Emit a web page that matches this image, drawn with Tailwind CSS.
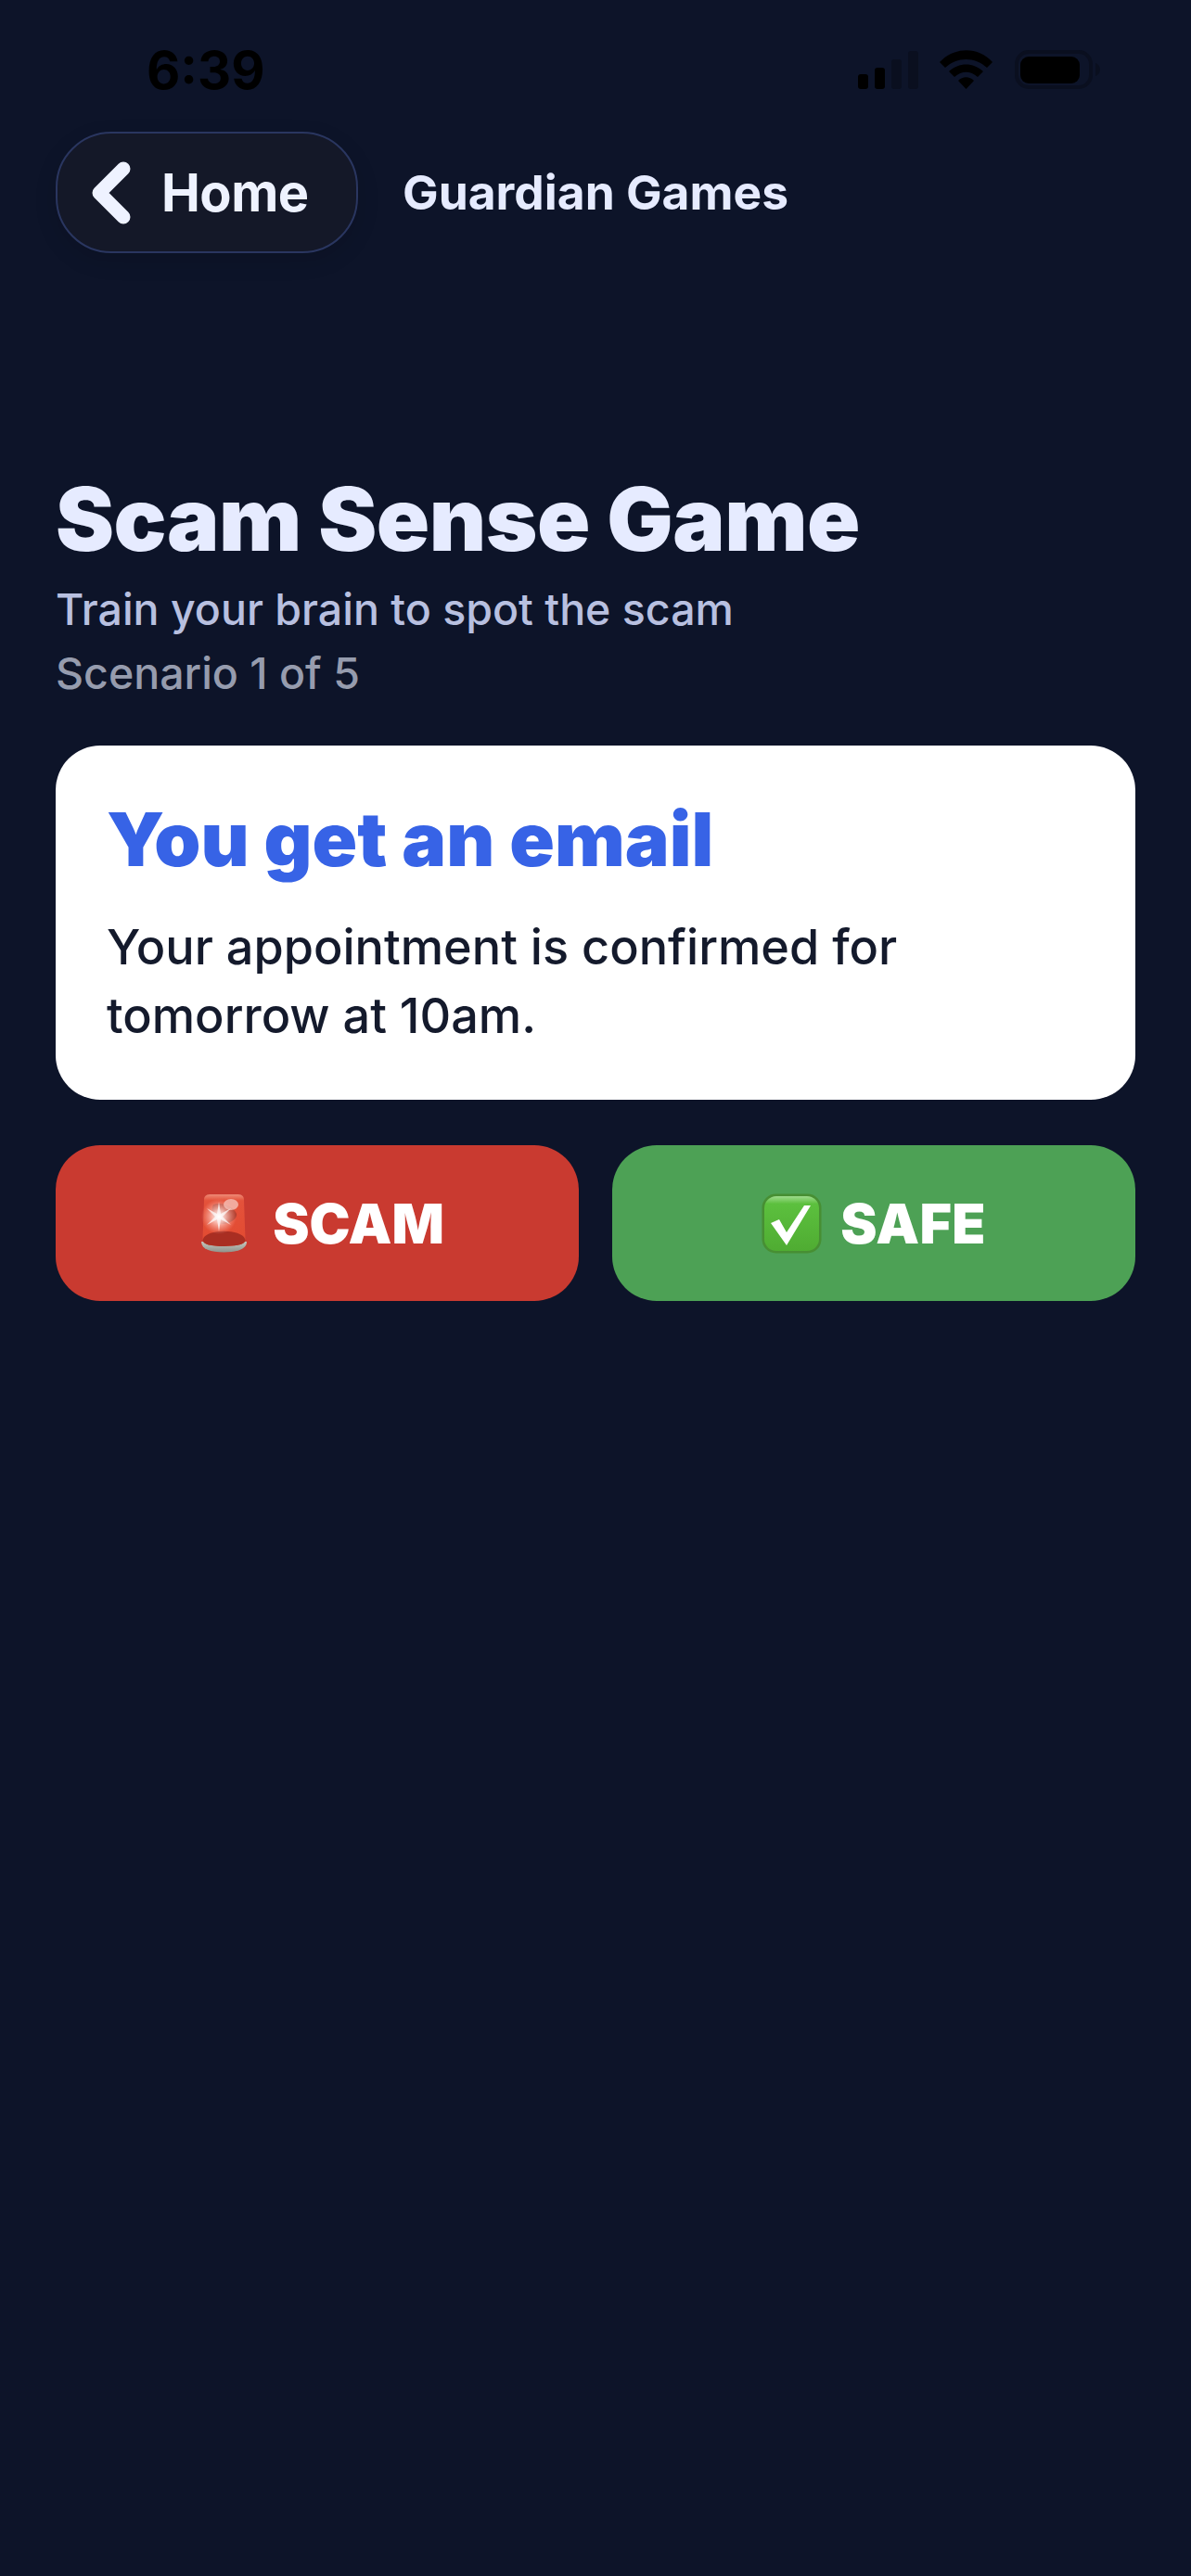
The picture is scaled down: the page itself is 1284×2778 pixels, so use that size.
<!doctype html>
<html lang="en">
<head>
<meta charset="utf-8">
<script src="https://cdn.jsdelivr.net/npm/@tailwindcss/browser@4"></script>
<title>Scam Sense Game</title>
</head>
<body class="m-0 bg-[#0d1429] font-['Inter',sans-serif]">
<div class="w-[1284px] h-[2778px] overflow-hidden flex flex-col">
  <div class="h-[142px] shrink-0 flex justify-between items-start pt-[44px] pl-[158px] pr-[97px]">
    <span class="text-[56px] leading-[64px] font-bold text-black">6:39</span>
    <svg class="mt-[10px]" width="262" height="44" viewBox="0 0 262 44">
      <rect x="0" y="26" width="11" height="16" rx="3" fill="#000"/>
      <rect x="18" y="19" width="11" height="23" rx="3" fill="#000"/>
      <rect x="36" y="10" width="11" height="32" rx="3" fill="#0a0f1f"/>
      <rect x="54" y="1" width="11" height="41" rx="3" fill="#0a0f1f"/>
      <path d="M88 13 C104 -4 130 -4 145 13 L139 19 C126 7 107 7 94 19Z M98 23 C109 13 124 13 135 23 L129 29 C121 22 112 22 104 29Z M108 33 C113 28 120 28 125 33 L116.500 42Z" fill="#000"/>
      <rect x="171" y="2" width="80" height="38" rx="13" fill="none" stroke="#0a0f1f" stroke-width="4"/>
      <rect x="175" y="7" width="64" height="29" rx="9" fill="#000"/>
      <path d="M256 14 C259 15 261 18 261 21 C261 24 259 27 256 28Z" fill="#0a0f1f"/>
    </svg>
  </div>
  <div class="flex items-center gap-[48px] pl-[60px] h-[131px] shrink-0">
    <div class="w-[326px] h-[131px] rounded-[60px] border-2 border-[#2a3660] bg-[#141828] flex items-center pl-[36px] gap-[32px] shadow-[0_8px_24px_rgba(0,0,0,0.12)]">
      <svg width="44" height="68" viewBox="0 0 44 68" class="shrink-0">
        <path d="M35 8 L9 34 L35 60" fill="none" stroke="#eef2ff" stroke-width="15" stroke-linecap="round" stroke-linejoin="round"/>
      </svg>
      <span class="text-[56px] leading-none font-bold tracking-[-0.5px] text-[#eef2ff]">Home</span>
    </div>
    <span class="text-[51.5px] leading-none font-bold text-[#e6ebff]">Guardian Games</span>
  </div>
  <div class="px-[60px] pt-[237px] flex flex-col">
    <h1 class="text-[94.7px] leading-[100px] font-black tracking-[-0.5px] text-[#e6ebff]">Scam Sense Game</h1>
    <p class="text-[46.5px] leading-[56px] mt-[19px] font-medium text-[#b8c0e0]">Train your brain to spot the scam</p>
    <p class="text-[46.5px] leading-[56px] mt-[13px] font-medium text-[#969cae]">Scenario 1 of 5</p>
    <div class="mt-[50px] h-[382px] rounded-[48px] bg-white px-[55px] pt-[55px] flex flex-col">
      <h2 class="text-[80.3px] leading-[92px] font-black text-[#3763e6]">You get an email</h2>
      <p class="mt-[33px] text-[52.2px] leading-[74px] font-medium text-[#141a2c]">Your appointment is confirmed for<br>tomorrow at 10am.</p>
    </div>
    <div class="mt-[49px] grid grid-cols-2 gap-[36px]">
      <div class="h-[168px] rounded-[48px] bg-[#c93a30] flex items-center justify-center gap-[28px] pl-[9px]">
        <svg class="ml-[3px]" width="49" height="64" viewBox="0 0 49 64">
          <defs>
            <linearGradient id="dome" x1="0" y1="0" x2="0" y2="1"><stop offset="0" stop-color="#ee8a76"/><stop offset="0.12" stop-color="#e4523b"/><stop offset="1" stop-color="#e24a30"/></linearGradient>
            <linearGradient id="base" x1="0" y1="0" x2="0" y2="1"><stop offset="0" stop-color="#c4c6bd"/><stop offset="1" stop-color="#8f938c"/></linearGradient>
            <radialGradient id="glow"><stop offset="0" stop-color="#fff"/><stop offset="0.35" stop-color="#ffd8d0" stop-opacity="0.8"/><stop offset="1" stop-color="#ffb0a0" stop-opacity="0"/></radialGradient>
          </defs>
          <path d="M0 52 C0 60 10 63.500 24.500 63.500 C39 63.500 49 60 49 52Z" fill="url(#base)"/>
          <path d="M3 7 C3 2 6 1 11 1 L38 1 C43 1 46 2 46 7 L47.500 50 C47.500 55 38 57 24.500 57 C11 57 1.500 55 1.500 50Z" fill="url(#dome)"/>
          <path d="M2 49 C6 38 43 38 47 49 L47.500 50 C47.500 55 38 57 24.500 57 C11 57 1.500 55 1.500 50Z" fill="#a92e22"/>
          <path d="M13 12 C20 9 34 12 38 22 C39 27 32 32 24 33 C14 33 9 20 13 12Z" fill="#8f3026" opacity="0.6"/>
          <ellipse cx="32" cy="12" rx="8" ry="6" fill="#f5c8c0" opacity="0.75"/>
          <circle cx="19" cy="25" r="19" fill="url(#glow)"/>
          <path d="M19 9 L21 22 L32 16 L23 25 L32 34 L21 28 L19 41 L17 28 L6 34 L15 25 L6 16 L17 22Z" fill="#fff" opacity="0.7"/>
        </svg>
        <span class="text-[59px] leading-none font-black text-white">SCAM</span>
      </div>
      <div class="h-[168px] rounded-[48px] bg-[#4da155] flex items-center justify-center gap-[20px]">
        <svg width="65" height="65" viewBox="0 0 65 65">
          <defs>
            <linearGradient id="chk" x1="0" y1="0" x2="0" y2="1"><stop offset="0" stop-color="#9edb8c"/><stop offset="0.14" stop-color="#5cc03e"/><stop offset="1" stop-color="#4fac32"/></linearGradient>
          </defs>
          <rect x="0.500" y="0.500" width="64" height="64" rx="15" fill="#478f33"/>
          <rect x="3" y="3" width="59" height="59" rx="13" fill="url(#chk)"/>
          <path d="M10 32 L19 28 L27 42 L46 13 L53 13 L27 56 Z" fill="#fff"/>
        </svg>
        <span class="text-[59px] leading-none font-black tracking-[0.4px] text-white">SAFE</span>
      </div>
    </div>
  </div>
</div>
</body>
</html>
